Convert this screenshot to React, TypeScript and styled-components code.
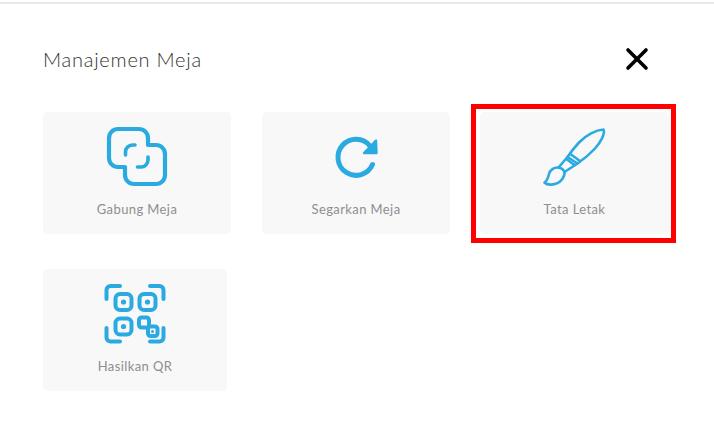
import * as React from "react";
import styled, { createGlobalStyle } from "styled-components";
import { X } from "lucide-react";

const BLUE = "#2baae1";

const GlobalStyle = createGlobalStyle`
  html, body {
    margin: 0;
    padding: 0;
    background: #fff;
    font-family: Lato, "Open Sans", sans-serif;
  }
`;

const Sheet = styled.div`
  width: 714px;
  height: 448px;
  box-sizing: border-box;
  padding: 2px 0 0 43px;
  overflow: hidden;
`;

const TopLine = styled.div`
  height: 2px;
  margin-left: -43px;
  background: #e9e9e9;
`;

const Header = styled.div`
  display: flex;
  align-items: center;
  justify-content: space-between;
  height: 108px;
  padding: 2px 59px 0 0;
  box-sizing: border-box;
`;

const Title = styled.h1`
  margin: 0;
  font-size: 20px;
  font-weight: 300;
  letter-spacing: 0.75px;
  color: #333;
`;

const CloseButton = styled.button`
  display: flex;
  padding: 0;
  border: 0;
  background: none;
  color: #000;
`;

const Grid = styled.div`
  display: grid;
  grid-template-columns: 219px 218px 189px;
  row-gap: 35px;
`;

const Highlight = styled.div`
  margin: -8px -7px -9px -9px;
  padding: 3px 2px 4px 4px;
  border: 5px solid #fe0000;
`;

const Card = styled.div<{ $width: number }>`
  width: ${(p) => p.$width}px;
  height: 122px;
  box-sizing: border-box;
  padding-top: 13px;
  display: flex;
  flex-direction: column;
  align-items: center;
  background: #f8f8f8;
  border-radius: 5px;
`;

const IconSvg = styled.svg`
  display: block;
  width: 64px;
  height: 64px;
  fill: none;
  stroke: ${BLUE};
  stroke-linecap: round;
  stroke-linejoin: round;
`;

const Label = styled.span`
  margin-top: 12px;
  font-size: 13px;
  line-height: 16px;
  letter-spacing: 0.4px;
  color: #8e8e8e;
`;

const MergeIcon = () => (
  <IconSvg viewBox="105 125 64 64" strokeWidth={4.2}>
    <path d="M125 167H118a9 9 0 0 1-9-9V138a9 9 0 0 1 9-9H139a9 9 0 0 1 9 9V145H156a9 9 0 0 1 9 9V175a9 9 0 0 1-9 9H134a9 9 0 0 1-9-9Z" />
    <path d="M125.5 155V152a7 7 0 0 1 7-7H135" strokeWidth={3.6} />
    <path d="M137.5 167H141a7 7 0 0 0 7-7V157" strokeWidth={3.6} />
  </IconSvg>
);

const RefreshIcon = () => (
  <IconSvg viewBox="323 125 64 64" strokeWidth={5}>
    <path d="M371.5 164.5A18 18 0 1 1 369 146" />
    <path d="M375 140.5L375.5 153H363Z" fill={BLUE} strokeWidth={2.4} />
  </IconSvg>
);

const BrushIcon = () => (
  <IconSvg viewBox="543 125 64 64" strokeWidth={2.6}>
    <path d="M603.5 129.5C596 130 586 135 579 142.5C574 148 570.500 152.500 567.500 157L577.500 163.500C584 159 590 154 595 148.500C600 143 605.500 134 603.500 129.500Z" />
    <path d="M571 154.500L580 161" />
    <path d="M567 159.500L574.500 165" />
    <path d="M567.500 157L558.500 167.500" />
    <path d="M577.500 163.500L564.500 172" />
    <path d="M558.500 167.500C554 167 550 170 549 174C548 178 547 181 544.500 182.500C547 185 552 185 556.500 183.500C561.500 181.500 565 176.500 564.500 172C563.500 169.500 561 168 558.500 167.500Z" />
  </IconSvg>
);

const QrIcon = () => (
  <IconSvg viewBox="103 283 64 64" strokeWidth={4}>
    <path d="M106.5 300V291a4 4 0 0 1 4-4H120" />
    <path d="M150 287H159.5a4 4 0 0 1 4 4V300" />
    <path d="M106.5 329V338.5a4 4 0 0 0 4 4H120" />
    <path d="M150 342.5H159.5a4 4 0 0 0 4-4V329" />
    <rect x="115.5" y="295" width="16" height="16" rx="4.5" />
    <rect x="139.5" y="295" width="16" height="16" rx="4.5" />
    <rect x="115.5" y="319.500" width="16" height="16" rx="4.5" />
    <circle cx="123.5" cy="303" r="2.6" fill={BLUE} stroke="none" />
    <circle cx="147.5" cy="303" r="2.6" fill={BLUE} stroke="none" />
    <circle cx="123.5" cy="327.5" r="2.6" fill={BLUE} stroke="none" />
    <rect x="139" y="318.500" width="10" height="10" rx="2.5" />
    <rect x="148" y="327.500" width="9.500" height="9.500" rx="2.5" />
    <circle cx="152.500" cy="332.500" r="1.5" fill={BLUE} stroke="none" />
  </IconSvg>
);

export default function App() {
  return (
    <Sheet>
      <GlobalStyle />
      <TopLine />
      <Header>
        <Title>Manajemen Meja</Title>
        <CloseButton aria-label="Tutup">
          <X size={36} strokeWidth={2.4} />
        </CloseButton>
      </Header>
      <Grid>
        <Card $width={188}>
          <MergeIcon />
          <Label>Gabung Meja</Label>
        </Card>
        <Card $width={188}>
          <RefreshIcon />
          <Label>Segarkan Meja</Label>
        </Card>
        <Highlight>
          <Card $width={189}>
            <BrushIcon />
            <Label>Tata Letak</Label>
          </Card>
        </Highlight>
        <Card $width={184}>
          <QrIcon />
          <Label>Hasilkan QR</Label>
        </Card>
      </Grid>
    </Sheet>
  );
}
